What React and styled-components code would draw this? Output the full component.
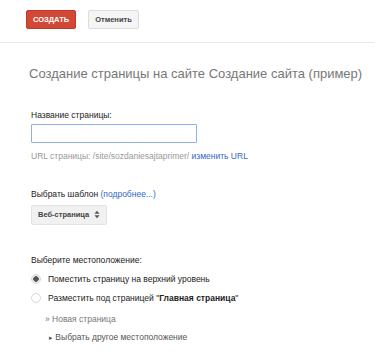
import React from 'react';
import styled, { createGlobalStyle } from 'styled-components';

const GlobalStyle = createGlobalStyle`
  html, body {
    margin: 0;
    padding: 0;
    background: #fff;
  }
  body {
    font-family: "Liberation Sans", Arial, sans-serif;
    color: #222;
  }
`;

export default function App() {
  return (
    <Page>
      <GlobalStyle />
      <Toolbar>
        <Button primary>СОЗДАТЬ</Button>
        <Button>Отменить</Button>
      </Toolbar>
      <Content>
        <Title>Создание страницы на сайте Создание сайта (пример)</Title>

        <Section>
          <Label>Название страницы:</Label>
          <TextInput type="text" />
          <Hint>
            URL страницы: /site/sozdaniesajtaprimer/ <Link>изменить URL</Link>
          </Hint>
        </Section>

        <Section space={30}>
          <Label>
            Выбрать шаблон <Link>(подробнее...)</Link>
          </Label>
          <Select>
            Веб-страница
            <Arrows viewBox="0 0 7 10">
              <path d="M3.5 0.5 L6.5 4 H0.5 Z M3.5 9.5 L6.5 6 H0.5 Z" fill="#555" />
            </Arrows>
          </Select>
        </Section>

        <Section>
          <Label>Выберите местоположение:</Label>
          <RadioRow>
            <Radio checked />
            <span>Поместить страницу на верхний уровень</span>
          </RadioRow>
          <RadioRow>
            <Radio />
            <span>
              Разместить под страницей "<b>Главная страница</b>"
            </span>
          </RadioRow>
          <SubItem>» Новая страница</SubItem>
          <ToggleItem>
            <Caret>▸</Caret> Выбрать другое местоположение
          </ToggleItem>
        </Section>
      </Content>
    </Page>
  );
}

/* Style */
const Page = styled.div`
  width: 375px;
  height: 361px;
  overflow: hidden;
`;

const Toolbar = styled.div`
  display: flex;
  gap: 12px;
  padding: 10px 0 13px 26px;
  border-bottom: 1px solid #ebebeb;
`;

const Button = styled.div`
  height: 19px;
  box-sizing: border-box;
  padding: 0 6px;
  display: flex;
  align-items: center;
  border-radius: 2px;
  font-size: 7.5px;
  font-weight: bold;
  color: ${(p) => (p.primary ? '#fff' : '#444')};
  background: ${(p) => (p.primary ? '#d14836' : '#f5f5f5')};
  border: 1px solid ${(p) => (p.primary ? '#c53727' : '#dcdcdc')};
`;

const Content = styled.div`
  padding: 23px 0 0 31px;
`;

const Title = styled.h1`
  margin: 0 0 28px -2px;
  font-size: 13px;
  line-height: 16px;
  font-weight: normal;
  color: #777;
`;

const Section = styled.div`
  margin-bottom: ${(p) => p.space || 27}px;
`;

const Label = styled.div`
  font-size: 8.5px;
  line-height: 11px;
  color: #222;
  margin-bottom: 3px;
`;

const TextInput = styled.input`
  display: block;
  width: 166px;
  height: 19px;
  box-sizing: border-box;
  margin: 0;
  border: 1px solid #8fb0ec;
  border-radius: 1px;
  outline: none;
`;

const Hint = styled.div`
  font-size: 8.5px;
  line-height: 11px;
  color: #999;
  margin-top: 8px;
`;

const Link = styled.span`
  color: #3366cc;
`;

const Select = styled.div`
  display: inline-flex;
  align-items: center;
  gap: 5px;
  height: 20px;
  box-sizing: border-box;
  padding: 0 6px;
  background: #f1f1f1;
  border: 1px solid #e3e3e3;
  border-radius: 2px;
  font-size: 7.5px;
  font-weight: bold;
  color: #444;
`;

const Arrows = styled.svg`
  width: 6px;
  height: 9px;
`;

const RadioRow = styled.div`
  display: flex;
  align-items: center;
  gap: 7px;
  font-size: 8.5px;
  line-height: 11px;
  color: #222;
  margin-top: 8px;
  height: 11px;
`;

const Radio = styled.span`
  width: 10px;
  height: 10px;
  border-radius: 50%;
  box-sizing: border-box;
  border: 1px solid #d8d8d8;
  background: ${(p) => (p.checked ? 'radial-gradient(circle, #555 0 2.5px, #eee 3px)' : '#fff')};
`;

const SubItem = styled.div`
  font-size: 8.5px;
  line-height: 11px;
  color: #777;
  margin: 10px 0 0 14px;
`;

const ToggleItem = styled.div`
  font-size: 8.5px;
  line-height: 11px;
  color: #555;
  margin: 7px 0 0 18px;
`;

const Caret = styled.span`
  font-size: 7px;
  color: #555;
`;
